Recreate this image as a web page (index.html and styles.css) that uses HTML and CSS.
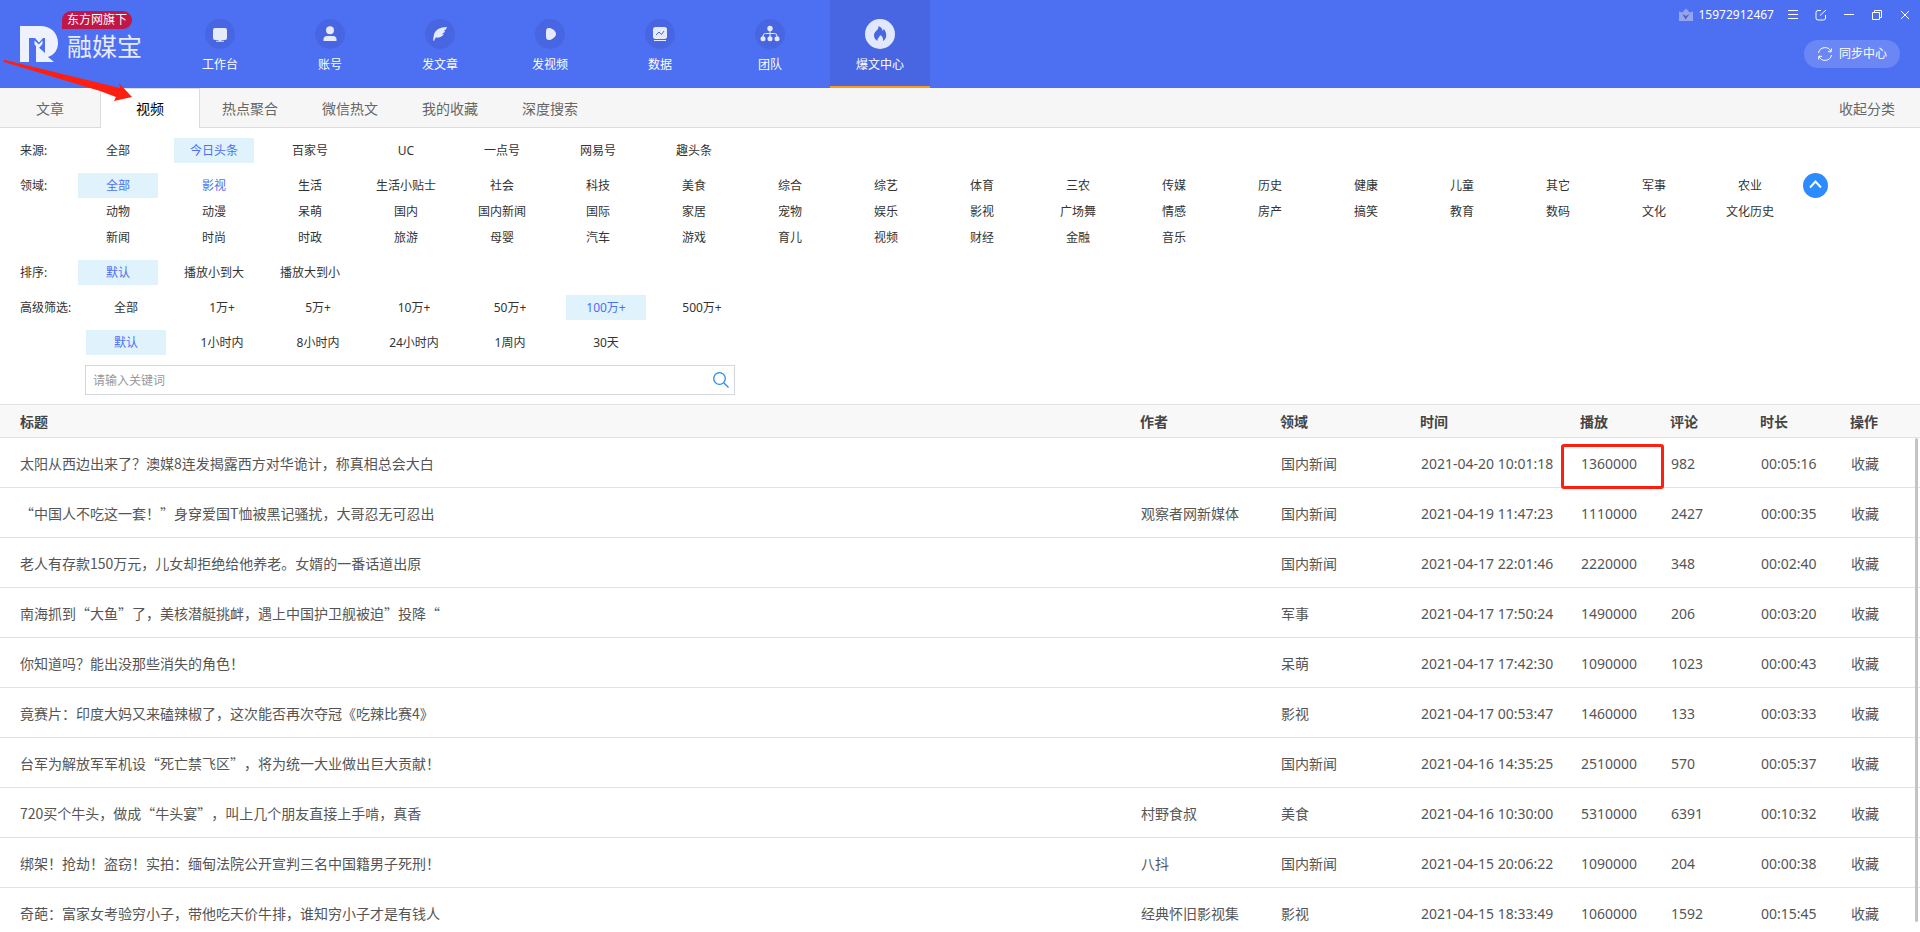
FILE: index.html
```html
<!DOCTYPE html>
<html lang="zh-CN">
<head>
<meta charset="utf-8">
<title>融媒宝 - 爆文中心</title>
<link rel="stylesheet" href="styles.css">
</head>
<body>
<header class="header">
  <div class="brand">
    <svg class="brand-mark" viewBox="0 0 38 36" width="38" height="36"><path fill="#eef2ff" fill-rule="evenodd" d="M0 0H20C31 0 38 7 38 17C38 24 34 29 28 31L34 36H16V19L25 27V12H23L19 16.500L15 12H9V36H0Z"/><path d="M14.500 14.500V18.500L18.500 22.500L22.500 18V14.500L18.800 18.500Z" fill="#eef2ff"/></svg>
    <div class="brand-text">
      <span class="brand-tag">东方网旗下</span>
      <span class="brand-name">融媒宝</span>
    </div>
  </div>
  <nav class="nav">
    <a class="nav-item" href="#"><svg viewBox="0 0 30 30"><circle cx="15" cy="15" r="15"/><path class="glyph" d="M10 9h10q2 0 2 2v8q0 2-2 2h-3.500v.8H19v1h-8v-1h2.500V21H10q-2 0-2-2v-8q0-2 2-2z"/></svg>工作台</a>
    <a class="nav-item" href="#"><svg viewBox="0 0 30 30"><circle cx="15" cy="15" r="15"/><circle class="glyph" cx="15" cy="11.200" r="4"/><path class="glyph" d="M8.500 22v-1.500q0-3.500 3.500-3.500h6q3.500 0 3.500 3.500V22z"/></svg>账号</a>
    <a class="nav-item" href="#"><svg viewBox="0 0 30 30"><circle cx="15" cy="15" r="15"/><path class="glyph" d="M22 8C15 8 10 11 9 15.500c-.6 2-.5 4-1 6l1.200.3c.4-1.500 1-2.600 1.800-3.300 4 .6 6.500-1 7.800-3.400l-2.300.1c2-.8 3.200-1.600 3.700-3.100l-1.800.1C20.500 11 21.500 10 22 8z"/></svg>发文章</a>
    <a class="nav-item" href="#"><svg viewBox="0 0 30 30"><circle cx="15" cy="15" r="15"/><path class="glyph" d="M11 12.500c0-3 1.500-4 4-3.400 3 .8 6 3.400 6 5.900s-3 5.100-6 5.900c-2.500.6-4-.4-4-3.400z"/></svg>发视频</a>
    <a class="nav-item" href="#"><svg viewBox="0 0 30 30"><circle cx="15" cy="15" r="15"/><rect class="glyph" x="8" y="8" width="14" height="12" rx="2.500"/><path d="M11 16l3-3 2.500 2.500L19 12" class="ink"/><rect class="glyph" x="9" y="21" width="12" height="1"/></svg>数据</a>
    <a class="nav-item" href="#"><svg viewBox="0 0 30 30"><circle cx="15" cy="15" r="15"/><path class="wire" d="M15 10v9M8 19v-2q0-2.500 2.500-2.500h9q2.500 0 2.500 2.500v2"/><circle class="glyph" cx="15" cy="9.500" r="2.700"/><circle class="glyph" cx="8" cy="19.700" r="2.500"/><circle class="glyph" cx="15" cy="19.700" r="2.500"/><circle class="glyph" cx="22" cy="19.700" r="2.500"/></svg>团队</a>
    <a class="nav-item active" href="#"><svg viewBox="0 0 30 30"><circle cx="15" cy="15" r="15"/><path class="flame" d="M12.500 22C10 20.500 9 18.500 9 16c0-2.500 2-4 3.500-5.500C13.500 9.500 13.500 8 13.500 7c2.500 1 4 2.800 4 5 .8-.5 1.200-1.300 1.200-2.200 1.500 1.700 2.600 4 2.500 6.400 0 2.500-1.200 4.600-3.200 5.800.5-2.500-.5-4.800-3-6-.2 2.500-3 3-2.500 6z"/></svg>爆文中心</a>
  </nav>
  <div class="header-side">
    <div class="window-bar">
      <svg class="crown" viewBox="0 0 14 14" width="14" height="14"><path fill="#93a5ee" d="M0 3.500L3.500 4.500 5 2.500 7 .5 9 2.500 10.500 4.500 14 3.500V13H0z"/><path fill="#4d62b8" d="M3.500 6l3 5.500L10.500 6 7 8z"/></svg>
      <span class="phone">15972912467</span>
      <button class="win-btn" aria-label="菜单"><svg viewBox="0 0 12 12"><path d="M1 1.500h10M1 5.500h10M1 9.500h10"/></svg></button>
      <button class="win-btn" aria-label="反馈"><svg viewBox="0 0 12 12"><path d="M6 1.500H3q-2 0-2 2V9q0 2 2 2h5.500q2 0 2-2V6M5 6.500L11 1"/></svg></button>
      <button class="win-btn" aria-label="最小化"><svg viewBox="0 0 12 12"><path d="M1 5.500h10"/></svg></button>
      <button class="win-btn" aria-label="还原"><svg viewBox="0 0 12 12"><path d="M1.500 3.500h7v7h-7zM3.500 3.500v-2h7v7h-2"/></svg></button>
      <button class="win-btn" aria-label="关闭"><svg viewBox="0 0 12 12"><path d="M2 2l8 8M10 2l-8 8"/></svg></button>
    </div>
    <button class="sync"><svg viewBox="0 0 16 16" width="16" height="16"><path d="M1.500 7A6.600 6.600 0 0 1 14 5.500M14.500 9A6.600 6.600 0 0 1 2 10.500M14.500 2.500L14 6l-3-.5M1.500 13.500L2 10l3 .5"/></svg>同步中心</button>
  </div>
</header>

<nav class="tabs">
  <a class="tab" href="#">文章</a>
  <a class="tab active" href="#">视频</a>
  <a class="tab" href="#">热点聚合</a>
  <a class="tab" href="#">微信热文</a>
  <a class="tab" href="#">我的收藏</a>
  <a class="tab" href="#">深度搜索</a>
  <button class="collapse">收起分类</button>
</nav>

<section class="filters">
  <div class="filter">
    <span class="filter-label">来源:</span>
    <div class="options">
      <button>全部</button><button class="on">今日头条</button><button>百家号</button><button>UC</button><button>一点号</button><button>网易号</button><button>趣头条</button>
    </div>
  </div>
  <div class="filter">
    <span class="filter-label">领域:</span>
    <div class="options domains">
      <button class="on">全部</button><button class="hover">影视</button><button>生活</button><button>生活小贴士</button><button>社会</button><button>科技</button><button>美食</button><button>综合</button><button>综艺</button><button>体育</button><button>三农</button><button>传媒</button><button>历史</button><button>健康</button><button>儿童</button><button>其它</button><button>军事</button><button>农业</button>
      <button>动物</button><button>动漫</button><button>呆萌</button><button>国内</button><button>国内新闻</button><button>国际</button><button>家居</button><button>宠物</button><button>娱乐</button><button>影视</button><button>广场舞</button><button>情感</button><button>房产</button><button>搞笑</button><button>教育</button><button>数码</button><button>文化</button><button>文化历史</button>
      <button>新闻</button><button>时尚</button><button>时政</button><button>旅游</button><button>母婴</button><button>汽车</button><button>游戏</button><button>育儿</button><button>视频</button><button>财经</button><button>金融</button><button>音乐</button>
    </div>
    <button class="fold" aria-label="收起"><svg viewBox="0 0 25 25" width="25" height="25"><path d="M7 14.500l5.500-6 5.500 6" /></svg></button>
  </div>
  <div class="filter">
    <span class="filter-label">排序:</span>
    <div class="options"><button class="on">默认</button><button>播放小到大</button><button>播放大到小</button></div>
  </div>
  <div class="filter wide">
    <span class="filter-label">高级筛选:</span>
    <div class="options"><button>全部</button><button>1万+</button><button>5万+</button><button>10万+</button><button>50万+</button><button class="on">100万+</button><button>500万+</button></div>
  </div>
  <div class="filter wide">
    <span class="filter-label"></span>
    <div class="options"><button class="on">默认</button><button>1小时内</button><button>8小时内</button><button>24小时内</button><button>1周内</button><button>30天</button></div>
  </div>
  <form class="search">
    <input type="text" placeholder="请输入关键词" aria-label="关键词">
    <button type="button" aria-label="搜索"><svg viewBox="0 0 16 16" width="16" height="16"><circle cx="6.500" cy="6.500" r="5.800"/><path d="M11 11l4.500 4.500"/></svg></button>
  </form>
</section>

<main class="list">
  <table class="table">
    <colgroup><col><col class="c-mid"><col class="c-mid"><col class="c-time"><col class="c-num"><col class="c-num"><col class="c-num"><col class="c-act"></colgroup>
    <thead><tr><th>标题</th><th>作者</th><th>领域</th><th>时间</th><th>播放</th><th>评论</th><th>时长</th><th>操作</th></tr></thead>
    <tbody>
      <tr><td>太阳从西边出来了？澳媒8连发揭露西方对华诡计，称真相总会大白</td><td></td><td>国内新闻</td><td>2021-04-20 10:01:18</td><td class="marked">1360000</td><td>982</td><td>00:05:16</td><td><a href="#">收藏</a></td></tr>
      <tr><td>“中国人不吃这一套！”身穿爱国T恤被黑记骚扰，大哥忍无可忍出</td><td>观察者网新媒体</td><td>国内新闻</td><td>2021-04-19 11:47:23</td><td>1110000</td><td>2427</td><td>00:00:35</td><td><a href="#">收藏</a></td></tr>
      <tr><td>老人有存款150万元，儿女却拒绝给他养老。女婿的一番话道出原</td><td></td><td>国内新闻</td><td>2021-04-17 22:01:46</td><td>2220000</td><td>348</td><td>00:02:40</td><td><a href="#">收藏</a></td></tr>
      <tr><td>南海抓到“大鱼”了，美核潜艇挑衅，遇上中国护卫舰被迫”投降“</td><td></td><td>军事</td><td>2021-04-17 17:50:24</td><td>1490000</td><td>206</td><td>00:03:20</td><td><a href="#">收藏</a></td></tr>
      <tr><td>你知道吗？能出没那些消失的角色！</td><td></td><td>呆萌</td><td>2021-04-17 17:42:30</td><td>1090000</td><td>1023</td><td>00:00:43</td><td><a href="#">收藏</a></td></tr>
      <tr><td>竟赛片：印度大妈又来磕辣椒了，这次能否再次夺冠《吃辣比赛4》</td><td></td><td>影视</td><td>2021-04-17 00:53:47</td><td>1460000</td><td>133</td><td>00:03:33</td><td><a href="#">收藏</a></td></tr>
      <tr><td>台军为解放军军机设“死亡禁飞区”，将为统一大业做出巨大贡献！</td><td></td><td>国内新闻</td><td>2021-04-16 14:35:25</td><td>2510000</td><td>570</td><td>00:05:37</td><td><a href="#">收藏</a></td></tr>
      <tr><td>720买个牛头，做成“牛头宴”，叫上几个朋友直接上手啃，真香</td><td>村野食叔</td><td>美食</td><td>2021-04-16 10:30:00</td><td>5310000</td><td>6391</td><td>00:10:32</td><td><a href="#">收藏</a></td></tr>
      <tr><td>绑架！抢劫！盗窃！实拍：缅甸法院公开宣判三名中国籍男子死刑！</td><td>八抖</td><td>国内新闻</td><td>2021-04-15 20:06:22</td><td>1090000</td><td>204</td><td>00:00:38</td><td><a href="#">收藏</a></td></tr>
      <tr><td>奇葩：富家女考验穷小子，带他吃天价牛排，谁知穷小子才是有钱人</td><td>经典怀旧影视集</td><td>影视</td><td>2021-04-15 18:33:49</td><td>1060000</td><td>1592</td><td>00:15:45</td><td><a href="#">收藏</a></td></tr>
    </tbody>
  </table>
  <div class="scrollbar"></div>
</main>

<svg class="arrow" viewBox="0 0 130 42" width="130" height="42" aria-hidden="true"><path d="M0 0L2 0L117 28L116 23L129 37L111 41L113 37L97 31L1 2Z"/></svg>
</body>
</html>
```
FILE: styles.css
```css
*, *::after { box-sizing: border-box; }

body {
  margin: 0;
  height: 100vh;
  display: flex;
  flex-direction: column;
  overflow: hidden;
  position: relative;
  background: #fff;
  color: #333;
  font: 12px/18px "Noto Sans", "Noto Sans CJK SC", sans-serif;
}

button, input {
  font: inherit;
  color: inherit;
  border: 0;
  padding: 0;
  background: none;
}

a { color: inherit; text-decoration: none; }

/* Header */
.header {
  flex: none;
  height: 88px;
  display: flex;
  background: #4d6ff2;
  color: #fff;
}

.brand {
  width: 170px;
  display: flex;
  align-items: flex-start;
  gap: 4px;
  padding-left: 20px;
}
.brand-mark { margin-top: 26px; }
.brand-text {
  display: flex;
  flex-direction: column;
  align-items: flex-start;
  padding-top: 11px;
}
.brand-tag {
  padding: 0 5px;
  border-radius: 9px 9px 9px 0;
  background: #c01648;
}
.brand-name {
  margin-left: 5px;
  font-size: 25px;
  line-height: 32px;
  font-weight: 400;
  font-family: "Noto Sans CJK SC", sans-serif;
  color: #e6ebfe;
}

.nav { display: flex; gap: 10px; }
.nav-item {
  width: 100px;
  padding-top: 19px;
  display: flex;
  flex-direction: column;
  align-items: center;
  gap: 7px;
  border-bottom: 2px solid transparent;
}
.nav-item svg { width: 30px; height: 30px; fill: #4866e2; }
.nav-item .glyph { fill: #e5eafd; }
.nav-item .ink { fill: none; stroke: #4866e2; }
.nav-item .wire { fill: none; stroke: #e5eafd; }
.nav-item.active { background: #4866e2; border-bottom-color: #ff9a1f; }
.nav-item.active svg { fill: #e1e7fd; }
.nav-item .flame { fill: #4866e2; }

.header-side {
  margin-left: auto;
  display: flex;
  flex-direction: column;
  align-items: flex-end;
  gap: 10px;
}
.window-bar {
  height: 30px;
  display: flex;
  align-items: center;
  padding-right: 1px;
}
.crown { margin-right: 5px; }
.phone { margin-right: 5px; }
.win-btn { width: 28px; height: 30px; display: grid; place-items: center; }
.win-btn svg { width: 12px; height: 12px; fill: none; stroke: #fff; }
.sync {
  width: 96px;
  height: 28px;
  margin-right: 20px;
  display: flex;
  align-items: center;
  justify-content: center;
  gap: 6px;
  border-radius: 14px;
  background: #6b87f6;
}
.sync svg { fill: none; stroke: #fff; }

/* Tabs */
.tabs {
  flex: none;
  height: 40px;
  display: flex;
  background: #f6f6f6;
  box-shadow: inset 0 -1px #dcdcdc;
  color: #666;
  font-size: 14px;
  line-height: 42px;
}
.tab { width: 100px; text-align: center; }
.tab.active {
  background: #fff;
  border: 1px solid #dcdcdc;
  border-bottom: 0;
  line-height: 40px;
  color: #000;
}
.collapse { height: 42px; margin: 0 25px 0 auto; }

/* Filters */
.filters {
  flex: none;
  display: flex;
  flex-direction: column;
  gap: 10px;
  padding: 10px 20px 9px;
}
.filter { display: flex; align-items: flex-start; }
.filter-label { flex: none; width: 58px; line-height: 25px; }
.wide .filter-label { width: 66px; }
.options { display: flex; flex-wrap: wrap; gap: 1px 16px; }
.options button { width: 80px; height: 25px; text-align: center; }
.options .on { background: #e0f3fd; color: #4d6ff2; }
.options .hover { color: #4d6ff2; }
.domains { max-width: 1712px; }
.fold {
  flex: none;
  width: 25px;
  height: 25px;
  margin-left: 13px;
  border-radius: 50%;
  background: #2b8bff;
}
.fold svg { display: block; fill: none; stroke: #fff; stroke-width: 2; }

.search {
  width: 650px;
  height: 30px;
  margin-left: 65px;
  display: flex;
  align-items: center;
  border: 1px solid #d4d6de;
}
.search input { flex: 1; height: 28px; padding-left: 7px; outline: 0; }
.search input::placeholder { color: #999; opacity: 1; }
.search button { width: 26px; height: 28px; display: grid; place-items: center; }
.search svg { fill: none; stroke: #1f8cf0; stroke-width: 1.3; }

/* List */
.list {
  flex: 1;
  min-height: 0;
  margin-bottom: 10px;
  overflow: hidden;
  position: relative;
}
.table {
  width: 100%;
  table-layout: fixed;
  border-collapse: separate;
  border-spacing: 0;
  font-size: 14px;
  line-height: 20px;
  color: #555;
}
.c-mid { width: 140px; }
.c-time { width: 160px; }
.c-num { width: 90px; }
.c-act { width: 70px; }
.table th {
  height: 34px;
  padding: 2px 0 0;
  text-align: left;
  font-weight: 700;
  color: #444;
  background: #f8f8f8;
  border: solid #e2e2e2;
  border-width: 1px 0;
}
.table td {
  height: 50px;
  padding: 2px 0 0 1px;
  white-space: nowrap;
  border-bottom: 1px solid #e2e2e2;
}
.table th:first-child { padding-left: 20px; }
.table td:first-child {
  padding: 0 0 0 20px;
  font-family: "Noto Sans CJK SC", sans-serif;
  text-spacing-trim: space-all;
}
.marked { position: relative; }
.marked::after {
  content: "";
  position: absolute;
  left: -19px;
  top: 6px;
  width: 103px;
  height: 45px;
  border: 3px solid #ff1f10;
  border-radius: 3px;
}
.scrollbar {
  position: absolute;
  top: 34px;
  right: 2px;
  bottom: 0;
  width: 3px;
  border-radius: 2px;
  background: #c4c4c4;
}

.arrow { position: absolute; left: 3px; top: 60px; fill: #ff1f10; }
```
